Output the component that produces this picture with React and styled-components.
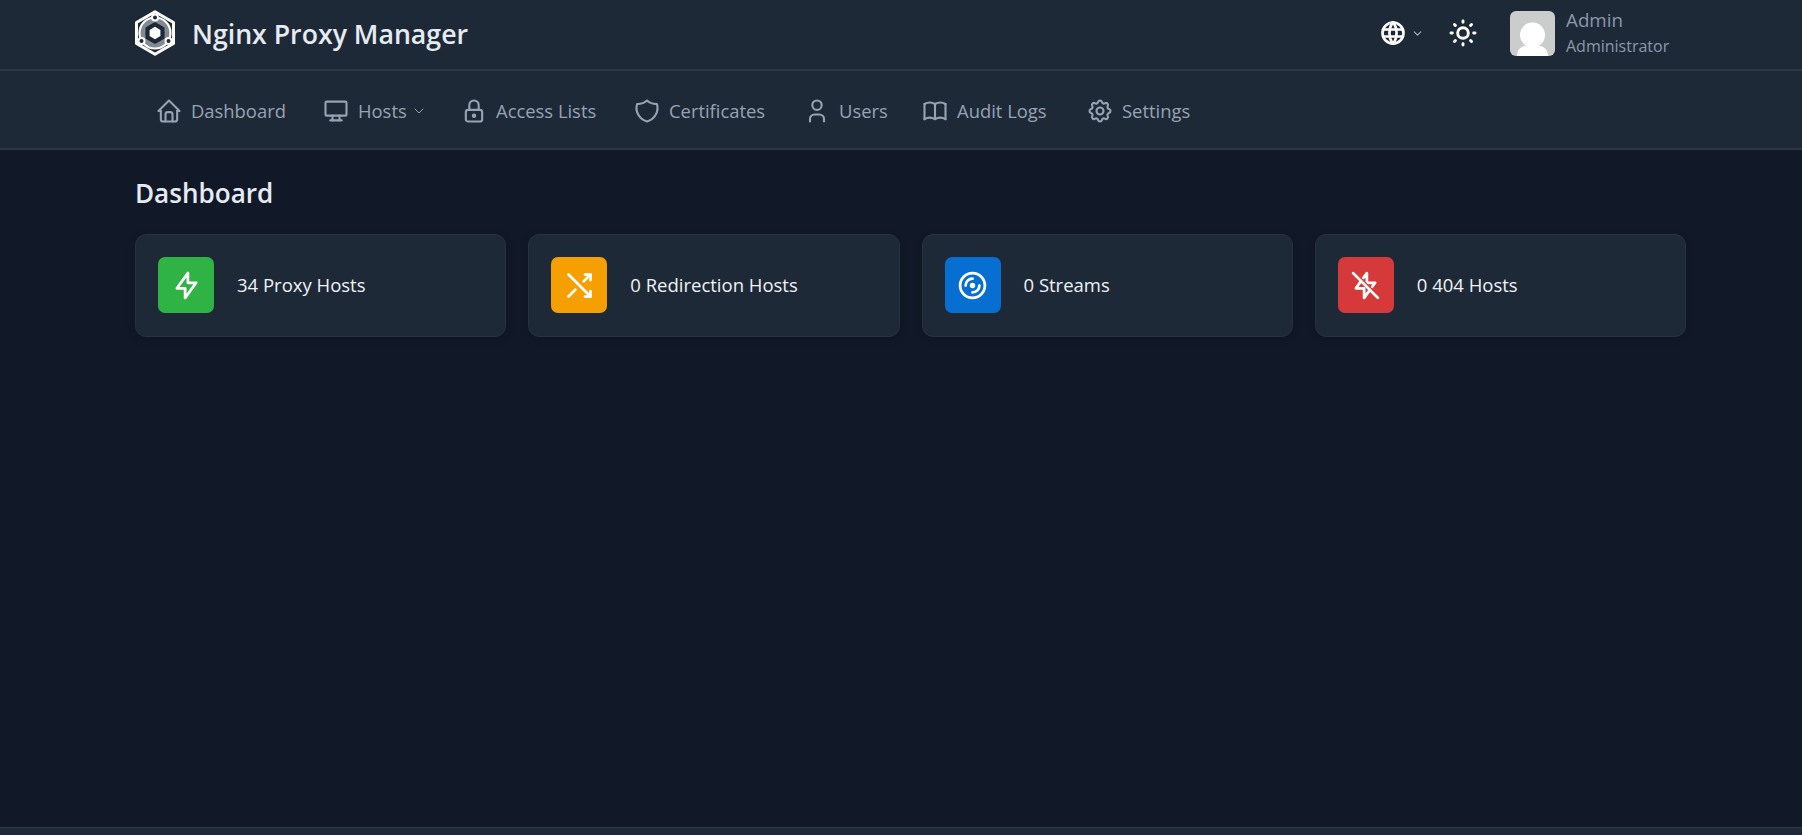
import React from "react";
import styled, { createGlobalStyle } from "styled-components";
import {
  TbHome, TbDeviceDesktop, TbChevronDown, TbLock, TbShield, TbUser, TbBook, TbSettings,
  TbWorld, TbSun, TbBolt, TbArrowsCross, TbDisc, TbBoltOff,
} from "react-icons/tb";

const Global = createGlobalStyle`
  html, body { margin: 0; padding: 0; background: #111827; }
  body { font-family: "Open Sans", "Noto Sans", "Liberation Sans", sans-serif; }
  * { box-sizing: border-box; }
`;

const Page = styled.div`
  display: flex;
  flex-direction: column;
  height: 835px;
  overflow: hidden;
  background: #111827;
`;

const TopBar = styled.header`
  height: 71px;
  flex: none;
  display: flex;
  align-items: center;
  justify-content: space-between;
  padding: 0 116px 3px 134px;
  background: #1e2938;
  border-bottom: 2px solid #2c3847;
`;

const Brand = styled.div`
  display: flex;
  align-items: center;
  gap: 16px;
  color: #e6ebf3;
  font-size: 26.7px;
  font-weight: 600;
`;

const Tools = styled.div`
  display: flex;
  align-items: center;
`;

const Lang = styled.div`
  display: flex;
  align-items: center;
  gap: 4px;
  color: #fff;
  margin-right: 23px;
`;

const Sun = styled.div`
  display: flex;
  color: #fff;
  margin-right: 31px;
`;

const Avatar = styled.div`
  width: 45px;
  height: 45px;
  border-radius: 6px;
  overflow: hidden;
  background: #cbcdcc;
  margin-right: 11px;
`;

const UserText = styled.div`
  display: flex;
  flex-direction: column;
  width: 120px;
  color: #8c98a9;
`;

const UserName = styled.span`
  font-size: 18.8px;
  line-height: 24px;
`;

const UserRole = styled.span`
  font-size: 16px;
  line-height: 26px;
  margin-top: 1px;
`;

const NavBar = styled.nav`
  height: 79px;
  flex: none;
  display: flex;
  align-items: center;
  padding: 2px 0 0 155px;
  background: #1e2938;
  border-bottom: 2px solid #2c3847;
`;

const NavItem = styled.div`
  display: flex;
  align-items: center;
  gap: 8px;
  width: ${(p) => p.$width}px;
  flex: none;
  color: #97a3b3;
  font-size: 18.4px;
`;

const Caret = styled(TbChevronDown)`
  margin-left: -4px;
`;

const Main = styled.main`
  flex: 1;
  padding: 0 116px 0 135px;
`;

const Title = styled.h1`
  margin: 22px 0 19px;
  height: 43px;
  line-height: 43px;
  font-size: 26.1px;
  font-weight: 600;
  color: #e6ebf3;
`;

const Cards = styled.div`
  display: grid;
  grid-template-columns: repeat(4, 1fr);
  gap: 22px;
`;

const Card = styled.div`
  height: 103px;
  display: flex;
  align-items: center;
  gap: 23px;
  padding: 0 22px;
  background: #1e2938;
  border: 1px solid #263241;
  border-radius: 11px;
  box-shadow: 0 2px 8px rgba(0, 0, 0, 0.15);
  color: #eef2f7;
  font-size: 18.5px;
  line-height: 24px;
`;

const CardLabel = styled.span`
  margin-bottom: 2px;
`;

const CardIcon = styled.div`
  width: 56px;
  height: 56px;
  flex: none;
  display: flex;
  align-items: center;
  justify-content: center;
  border-radius: 7px;
  margin-top: -1px;
  color: #fff;
  background: ${(p) => p.$bg};
`;

const Footer = styled.footer`
  height: 8px;
  flex: none;
  background: #1e2938;
  border-top: 1px solid #2c3847;
`;

const Logo = () => (
  <svg width="42" height="46" viewBox="0 0 42 46">
    <path d="M21 1.800 39.500 12.500V33.500L21 44.200 2.500 33.500V12.500Z" fill="#1e2938" stroke="#fff" strokeWidth="3" strokeLinejoin="round" />
    <circle cx="21" cy="23" r="12.500" fill="none" stroke="#ffffff" strokeOpacity="0.45" strokeWidth="6" />
    <circle cx="21" cy="23" r="15.500" fill="none" stroke="#fff" strokeWidth="2.200" />
    <circle cx="21" cy="7.500" r="3" fill="#1e2938" stroke="#fff" strokeWidth="2" />
    <circle cx="7.500" cy="31" r="3" fill="#1e2938" stroke="#fff" strokeWidth="2" />
    <circle cx="34.500" cy="31" r="3" fill="#1e2938" stroke="#fff" strokeWidth="2" />
    <path d="M21 12 30.500 17.500V28.500L21 34 11.500 28.500V17.500Z" fill="#1e2938" />
    <path d="M21 16.800 26.400 19.900V26.100L21 29.200 15.600 26.100V19.900Z" fill="#fff" />
  </svg>
);

const AvatarArt = () => (
  <svg width="45" height="45" viewBox="0 0 45 45">
    <circle cx="22.500" cy="24" r="12.500" fill="#fff" />
    <path d="M7 45c0-8 6-11 15.500-11S38 37 38 45Z" fill="#fff" />
  </svg>
);

const nav = [
  { label: "Dashboard", Icon: TbHome, width: 167 },
  { label: "Hosts", Icon: TbDeviceDesktop, width: 138, caret: true },
  { label: "Access Lists", Icon: TbLock, width: 173 },
  { label: "Certificates", Icon: TbShield, width: 170 },
  { label: "Users", Icon: TbUser, width: 118 },
  { label: "Audit Logs", Icon: TbBook, width: 165 },
  { label: "Settings", Icon: TbSettings, width: 120 },
];

const cards = [
  { label: "34 Proxy Hosts", Icon: TbBolt, bg: "#2fb344" },
  { label: "0 Redirection Hosts", Icon: TbArrowsCross, bg: "#f59f00" },
  { label: "0 Streams", Icon: TbDisc, bg: "#066fd1" },
  { label: "0 404 Hosts", Icon: TbBoltOff, bg: "#d63939" },
];

export default function App() {
  return (
    <Page>
      <Global />
      <TopBar>
        <Brand>
          <Logo />
          Nginx Proxy Manager
        </Brand>
        <Tools>
          <Lang>
            <TbWorld size={28} strokeWidth={2.3} />
            <TbChevronDown size={13} color="#aab3c0" />
          </Lang>
          <Sun>
            <TbSun size={32} strokeWidth={2.2} />
          </Sun>
          <Avatar>
            <AvatarArt />
          </Avatar>
          <UserText>
            <UserName>Admin</UserName>
            <UserRole>Administrator</UserRole>
          </UserText>
        </Tools>
      </TopBar>
      <NavBar>
        {nav.map(({ label, Icon, width, caret }) => (
          <NavItem key={label} $width={width}>
            <Icon size={28} strokeWidth={1.8} />
            {label}
            {caret && <Caret size={16} strokeWidth={1.5} />}
          </NavItem>
        ))}
      </NavBar>
      <Main>
        <Title>Dashboard</Title>
        <Cards>
          {cards.map(({ label, Icon, bg }) => (
            <Card key={label}>
              <CardIcon $bg={bg}>
                <Icon size={33} strokeWidth={2} />
              </CardIcon>
              <CardLabel>{label}</CardLabel>
            </Card>
          ))}
        </Cards>
      </Main>
      <Footer />
    </Page>
  );
}
